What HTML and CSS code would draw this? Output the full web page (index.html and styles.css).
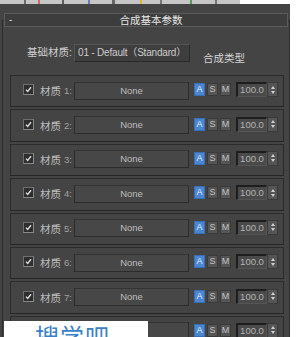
FILE: index.html
```html
<!DOCTYPE html>
<html lang="zh">
<head>
    <meta charset="UTF-8">
    <title>合成基本参数</title>
    <link rel="stylesheet" href="styles.css">
</head>
<body>
    <div class="strip"></div>
    <div class="panel">
        <div class="rollout">
            <div class="rollout-head">
                <span class="toggle">-</span>
                <span class="title">合成基本参数</span>
            </div>
            <div class="base-row">
                <span class="base-label">基础材质:</span>
                <div class="base-btn">01 - Default（Standard）</div>
                <span class="type-label">合成类型</span>
            </div>
            <div class="mat-list">
                <div class="mat-row">
                    <span class="check"><svg width="9" height="9" viewBox="0 0 9 9"><polyline points="2,4.6 3.7,6.5 7,2.2" fill="none" stroke="#dcdcdc" stroke-width="1.4"/></svg></span>
                    <span class="mat-label">材质 <i>1:</i></span>
                    <div class="none-btn">None</div>
                    <span class="mode on">A</span><span class="mode">S</span><span class="mode">M</span>
                    <span class="amount">100.0</span><span class="spin"><b class="up"></b><b class="down"></b></span>
                </div>
                <div class="mat-row">
                    <span class="check"><svg width="9" height="9" viewBox="0 0 9 9"><polyline points="2,4.6 3.7,6.5 7,2.2" fill="none" stroke="#dcdcdc" stroke-width="1.4"/></svg></span>
                    <span class="mat-label">材质 <i>2:</i></span>
                    <div class="none-btn">None</div>
                    <span class="mode on">A</span><span class="mode">S</span><span class="mode">M</span>
                    <span class="amount">100.0</span><span class="spin"><b class="up"></b><b class="down"></b></span>
                </div>
                <div class="mat-row">
                    <span class="check"><svg width="9" height="9" viewBox="0 0 9 9"><polyline points="2,4.6 3.7,6.5 7,2.2" fill="none" stroke="#dcdcdc" stroke-width="1.4"/></svg></span>
                    <span class="mat-label">材质 <i>3:</i></span>
                    <div class="none-btn">None</div>
                    <span class="mode on">A</span><span class="mode">S</span><span class="mode">M</span>
                    <span class="amount">100.0</span><span class="spin"><b class="up"></b><b class="down"></b></span>
                </div>
                <div class="mat-row">
                    <span class="check"><svg width="9" height="9" viewBox="0 0 9 9"><polyline points="2,4.6 3.7,6.5 7,2.2" fill="none" stroke="#dcdcdc" stroke-width="1.4"/></svg></span>
                    <span class="mat-label">材质 <i>4:</i></span>
                    <div class="none-btn">None</div>
                    <span class="mode on">A</span><span class="mode">S</span><span class="mode">M</span>
                    <span class="amount">100.0</span><span class="spin"><b class="up"></b><b class="down"></b></span>
                </div>
                <div class="mat-row">
                    <span class="check"><svg width="9" height="9" viewBox="0 0 9 9"><polyline points="2,4.6 3.7,6.5 7,2.2" fill="none" stroke="#dcdcdc" stroke-width="1.4"/></svg></span>
                    <span class="mat-label">材质 <i>5:</i></span>
                    <div class="none-btn">None</div>
                    <span class="mode on">A</span><span class="mode">S</span><span class="mode">M</span>
                    <span class="amount">100.0</span><span class="spin"><b class="up"></b><b class="down"></b></span>
                </div>
                <div class="mat-row">
                    <span class="check"><svg width="9" height="9" viewBox="0 0 9 9"><polyline points="2,4.6 3.7,6.5 7,2.2" fill="none" stroke="#dcdcdc" stroke-width="1.4"/></svg></span>
                    <span class="mat-label">材质 <i>6:</i></span>
                    <div class="none-btn">None</div>
                    <span class="mode on">A</span><span class="mode">S</span><span class="mode">M</span>
                    <span class="amount">100.0</span><span class="spin"><b class="up"></b><b class="down"></b></span>
                </div>
                <div class="mat-row">
                    <span class="check"><svg width="9" height="9" viewBox="0 0 9 9"><polyline points="2,4.6 3.7,6.5 7,2.2" fill="none" stroke="#dcdcdc" stroke-width="1.4"/></svg></span>
                    <span class="mat-label">材质 <i>7:</i></span>
                    <div class="none-btn">None</div>
                    <span class="mode on">A</span><span class="mode">S</span><span class="mode">M</span>
                    <span class="amount">100.0</span><span class="spin"><b class="up"></b><b class="down"></b></span>
                </div>
                <div class="mat-row">
                    <span class="check"><svg width="9" height="9" viewBox="0 0 9 9"><polyline points="2,4.6 3.7,6.5 7,2.2" fill="none" stroke="#dcdcdc" stroke-width="1.4"/></svg></span>
                    <span class="mat-label covered">材质 <i>8:</i></span>
                    <div class="none-btn">None</div>
                    <span class="mode on">A</span><span class="mode">S</span><span class="mode">M</span>
                    <span class="amount">100.0</span><span class="spin"><b class="up"></b><b class="down"></b></span>
                </div>
            </div>
        </div>
    </div>
    <div class="watermark">搜学吧</div>
</body>
</html>
```

FILE: styles.css
```css
body {
    margin: 0;
    background-color: #ffffff;
    font-family: "Liberation Sans", "Noto Sans CJK SC", sans-serif;
    overflow: hidden;
}
.strip {
    height: 4px;
    width: 240px;
    background: linear-gradient(90deg, #c6c6c6 0, #c6c6c6 24px, #6a6a6a 24px, #6a6a6a 26px, #c6c6c6 26px, #c6c6c6 38px, #d06a5a 38px, #d06a5a 40px, #c6c6c6 40px, #c6c6c6 62px, #5d5d5d 62px, #5d5d5d 64px, #c6c6c6 64px, #c6c6c6 88px, #6080c0 88px, #6080c0 90px, #c6c6c6 90px, #c6c6c6 112px, #666 112px, #666 115px, #c6c6c6 115px, #c6c6c6 140px, #e0b040 140px, #e0b040 142px, #c6c6c6 142px, #c6c6c6 160px, #777 160px, #777 162px, #c6c6c6 162px, #c6c6c6 190px, #5a9a5a 190px, #5a9a5a 192px, #c6c6c6 192px, #c6c6c6 215px, #777 215px, #777 217px, #c6c6c6 217px);
}
.panel {
    width: 290px;
    height: 340px;
    background-color: #444444;
    padding-top: 16px;
    box-sizing: border-box;
}
.rollout {
    margin-left: 2px;
    width: 288px;
    height: 330px;
    border: 1px solid #2e2e2e;
    border-bottom: none;
    box-sizing: border-box;
}
.rollout-head {
    margin: -8px 1px 0 1px;
    height: 14px;
    border: 1px solid #5c5c5c;
    background-color: #3d3d3d;
    box-sizing: border-box;
    display: flex;
    align-items: center;
    position: relative;
}
.toggle {
    color: #dddddd;
    font-size: 10px;
    margin-left: 4px;
    line-height: 10px;
}
.title {
    position: absolute;
    left: 0;
    right: 0;
    text-align: center;
    color: #e8e8e8;
    font-size: 10.5px;
    line-height: 12px;
    padding-left: 10px;
}
.base-row {
    display: flex;
    align-items: flex-start;
    margin-top: 17px;
    padding-left: 24px;
}
.base-label {
    color: #cfcfcf;
    font-size: 10.5px;
    line-height: 17px;
    width: 47px;
}
.base-btn {
    width: 116px;
    height: 18px;
    box-sizing: border-box;
    border: 1px solid #2a2a2a;
    border-top-color: #555555;
    border-left-color: #555555;
    background-color: #3e3e3e;
    color: #cccccc;
    font-size: 10px;
    line-height: 15px;
    text-align: center;
    white-space: nowrap;
    letter-spacing: -0.2px;
}
.type-label {
    color: #d4d4d4;
    font-size: 10.5px;
    margin-left: 13px;
    margin-top: 8px;
    line-height: 13px;
}
.mat-list {
    margin-top: 10px;
    margin-left: 7px;
}
.mat-row {
    width: 274px;
    height: 32.4px;
    box-sizing: border-box;
    border: 1px solid #2b2b2b;
    border-bottom-color: #262626;
    margin-bottom: 2px;
    display: flex;
    align-items: center;
    padding-left: 12px;
    padding-bottom: 1px;
}
.check {
    width: 11px;
    height: 11px;
    box-sizing: border-box;
    border: 1px solid #6e6e6e;
    border-right-color: #8a8a8a;
    border-bottom-color: #8a8a8a;
    background-color: #2e2e2e;
    display: flex;
    align-items: center;
    justify-content: center;
    margin-right: 6px;
    margin-top: -2px;
}
.mat-label {
    width: 34px;
    color: #bdbdbd;
    font-size: 10.5px;
    white-space: nowrap;
}
.mat-label i {
    font-style: normal;
    font-size: 9.5px;
    color: #a2a2a2;
    position: relative;
    top: -1px;
}
.covered {
    visibility: hidden;
}
.none-btn {
    width: 115px;
    height: 18px;
    box-sizing: border-box;
    border: 1px solid #2c2c2c;
    border-top-color: #333333;
    background-color: #474747;
    color: #bdbdbd;
    font-size: 9.5px;
    line-height: 16px;
    text-align: center;
    margin-right: 5px;
}
.mode {
    width: 11px;
    height: 13px;
    box-sizing: border-box;
    border: 1px solid #3a3a3a;
    background-color: #555555;
    color: #c4c4c4;
    font-size: 9px;
    line-height: 11px;
    text-align: center;
    margin-right: 2px;
    margin-top: -2px;
}
.mode.on {
    background-color: #4a86d2;
    border-color: #3a6eb4;
    color: #e6eefa;
}
.amount {
    width: 31px;
    height: 15px;
    box-sizing: border-box;
    margin-left: 3px;
    margin-top: -2px;
    border: 1px solid #555555;
    border-top: 2px solid #1e1e1e;
    border-left: 2px solid #1e1e1e;
    background-color: #4a4a4a;
    color: #b4b4b4;
    font-size: 9.5px;
    line-height: 12px;
    text-align: center;
}
.spin {
    width: 11px;
    height: 15px;
    box-sizing: border-box;
    margin-top: -2px;
    border: 1px solid #3a3a3a;
    background-color: #555555;
    display: flex;
    flex-direction: column;
    align-items: center;
    justify-content: center;
    gap: 2px;
}
.spin b {
    width: 0;
    height: 0;
    border-left: 2.5px solid transparent;
    border-right: 2.5px solid transparent;
}
.spin .up {
    border-bottom: 3px solid #d0d0d0;
}
.spin .down {
    border-top: 3px solid #d0d0d0;
}
.watermark {
    position: absolute;
    left: 4px;
    top: 321px;
    width: 144px;
    height: 30px;
    background-color: #ffffff;
    color: #3b7fc6;
    font-family: "Noto Sans CJK SC", sans-serif;
    font-size: 24px;
    line-height: 30px;
    padding-left: 31px;
    box-sizing: border-box;
    letter-spacing: 1px;
}
```
